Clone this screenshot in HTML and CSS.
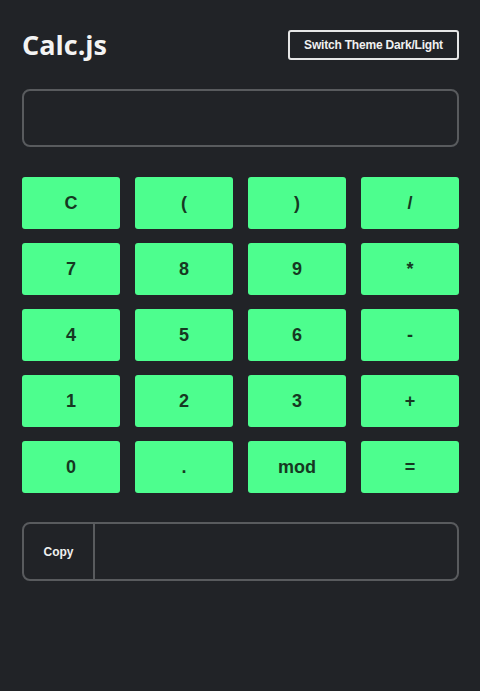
FILE: index.html
```html
<!DOCTYPE html>
<html>
<head>
<meta charset="utf-8">
<link rel="stylesheet" href="styles.css">
</head>
<body>
<main class="app">
  <header class="header">
    <h1 class="title">Calc.js</h1>
    <button class="theme-btn">Switch Theme Dark/Light</button>
  </header>
  <div class="display"></div>
  <div class="keys">
    <button class="key">C</button>
    <button class="key">(</button>
    <button class="key">)</button>
    <button class="key">/</button>
    <button class="key">7</button>
    <button class="key">8</button>
    <button class="key">9</button>
    <button class="key">*</button>
    <button class="key">4</button>
    <button class="key">5</button>
    <button class="key">6</button>
    <button class="key">-</button>
    <button class="key">1</button>
    <button class="key">2</button>
    <button class="key">3</button>
    <button class="key">+</button>
    <button class="key">0</button>
    <button class="key">.</button>
    <button class="key">mod</button>
    <button class="key">=</button>
  </div>
  <div class="copy-box">
    <button class="copy-btn">Copy</button>
    <div class="copy-out"></div>
  </div>
</main>
</body>
</html>
```
FILE: styles.css
```css
html, body {
  margin: 0;
  padding: 0;
  background: #212327;
  height: 100%;
}
body {
  font-family: "Liberation Sans", Arial, sans-serif;
}
.app {
  width: 437px;
  margin-left: 22px;
  padding-top: 30px;
}
.header {
  display: flex;
  justify-content: space-between;
  align-items: center;
  height: 30px;
}
.title {
  margin: 0;
  font-family: "Open Sans", sans-serif;
  font-weight: 700;
  font-size: 27px;
  color: #f3f3f3;
  letter-spacing: 0;
  line-height: 30px;
}
.theme-btn {
  width: 171px;
  height: 30px;
  background: transparent;
  border: 2px solid #e6e6e6;
  border-radius: 3px;
  color: #f0f0f0;
  font-family: "Liberation Sans", Arial, sans-serif;
  font-weight: 700;
  font-size: 12px;
  letter-spacing: -0.2px;
  padding: 0;
}
.display {
  margin-top: 29px;
  height: 54px;
  border: 2px solid #595b5e;
  border-radius: 8px;
}
.keys {
  margin-top: 30px;
  display: grid;
  grid-template-columns: repeat(4, 98px);
  grid-auto-rows: 52px;
  column-gap: 15px;
  row-gap: 14px;
}
.key {
  background: #4dfe8e;
  border: none;
  border-radius: 3px;
  color: #163822;
  font-family: "Liberation Sans", Arial, sans-serif;
  font-weight: 700;
  font-size: 18px;
  padding: 0;
}
.copy-box {
  margin-top: 29px;
  height: 55px;
  border: 2px solid #595b5e;
  border-radius: 8px;
  display: flex;
}
.copy-btn {
  width: 71px;
  background: transparent;
  border: none;
  border-right: 2px solid #595b5e;
  color: #f0f0f0;
  font-family: "Liberation Sans", Arial, sans-serif;
  font-weight: 700;
  font-size: 12px;
  padding: 0;
}
.copy-out {
  flex: 1;
}
```
